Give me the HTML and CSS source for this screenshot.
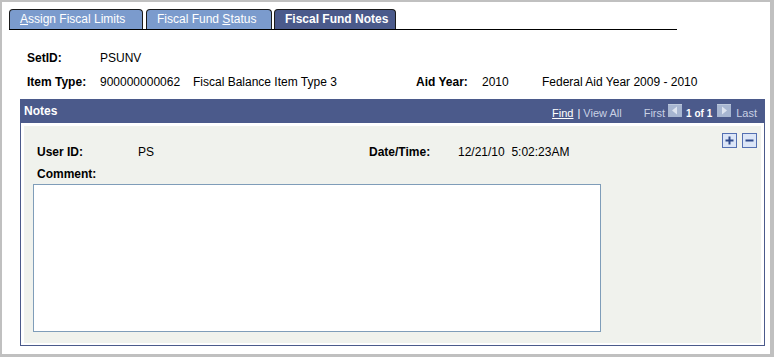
FILE: index.html
```html
<!DOCTYPE html>
<html>
<head>
<meta charset="utf-8">
<link rel="stylesheet" href="styles.css">
</head>
<body>
<div class="frame">
  <div class="tabs">
    <div class="tab tab-limits"><span class="key">A</span>ssign Fiscal Limits</div>
    <div class="tab tab-status">Fiscal Fund <span class="key">S</span>tatus</div>
    <div class="tab tab-notes active">Fiscal Fund Notes</div>
  </div>
  <div class="fields">
    <div class="row">
      <span class="lbl w-set">SetID:</span><span class="val">PSUNV</span>
    </div>
    <div class="row">
      <span class="lbl w-item">Item Type:</span><span class="val w-num">900000000062</span><span class="val w-desc">Fiscal Balance Item Type 3</span><span class="lbl w-aid">Aid Year:</span><span class="val w-year">2010</span><span class="val">Federal Aid Year 2009 - 2010</span>
    </div>
  </div>
  <div class="group">
    <div class="bar">
      <span class="title">Notes</span>
      <div class="nav">
        <span class="find">Find</span><span class="sep">|</span><span class="dim">View All</span><span class="dim first">First</span><svg class="arrow" width="14" height="13" viewBox="0 0 14 13"><rect x="0" y="0" width="14" height="13" fill="#a7b6d1"/><rect x="0" y="0" width="14" height="1" fill="#bcc8dc"/><polygon points="9,2.5 4,6.5 9,10.5" fill="#dde4f0"/></svg><span class="count">1 of 1</span><svg class="arrow" width="14" height="13" viewBox="0 0 14 13"><rect x="0" y="0" width="14" height="13" fill="#a7b6d1"/><rect x="0" y="0" width="14" height="1" fill="#bcc8dc"/><polygon points="5,2.5 10,6.5 5,10.5" fill="#dde4f0"/></svg><span class="dim last">Last</span>
      </div>
    </div>
    <div class="body">
      <div class="inner">
        <div class="main">
          <div class="row user-row">
            <span class="lbl w-user">User ID:</span><span class="val w-ps">PS</span><span class="lbl w-dt">Date/Time:</span><span class="val">12/21/10&nbsp; 5:02:23AM</span>
          </div>
          <div class="comment-label">Comment:</div>
          <textarea class="comment"></textarea>
        </div>
        <div class="rowbtns">
          <svg class="btn" width="15" height="15" viewBox="0 0 15 15"><rect x="0.5" y="0.5" width="14" height="14" fill="#dce6f7" stroke="#5470b2"/><path d="M7.5 3.5v8M3.5 7.5h8" stroke="#2f4a8c" stroke-width="2"/></svg>
          <svg class="btn" width="15" height="15" viewBox="0 0 15 15"><rect x="0.5" y="0.5" width="14" height="14" fill="#dce6f7" stroke="#5470b2"/><path d="M3.5 7.5h8" stroke="#2f4a8c" stroke-width="2"/></svg>
        </div>
      </div>
    </div>
  </div>
</div>
</body>
</html>
```
FILE: styles.css
```css
html, body {
  margin: 0;
  padding: 0;
  background: #ffffff;
}
body {
  font-family: "Liberation Sans", Arial, sans-serif;
  font-size: 12px;
  color: #000;
}
.frame {
  width: 774px;
  height: 357px;
  box-sizing: border-box;
  border-style: solid;
  border-color: #c0c0c0;
  border-width: 2px 4px 3px 2px;
  background: #fff;
  overflow: hidden;
}
.tabs {
  display: flex;
  align-items: flex-end;
  gap: 2px;
  margin: 7px 0 0 7px;
  width: 668px;
  height: 20px;
  border-bottom: 1px solid #000;
}
.tab {
  box-sizing: border-box;
  height: 20px;
  border: 1px solid #1a1a1a;
  border-bottom: none;
  border-radius: 4px 4px 0 0;
  background: #7b9bcd;
  color: #fff;
  line-height: 19px;
  padding-left: 10px;
  white-space: nowrap;
}
.tab-limits { width: 134px; }
.tab-status { width: 126px; margin-left: 1px; padding-left: 10px; }
.tab-notes { width: 122px; }
.tab.active {
  background: #4b5a8b;
  font-weight: bold;
}
.key { text-decoration: underline; }
.fields {
  margin-top: 16px;
  padding-left: 25px;
}
.row {
  display: flex;
  line-height: 24px;
  white-space: nowrap;
}
.lbl { font-weight: bold; }
.w-set { width: 73px; }
.w-item { width: 73px; }
.w-num { width: 93px; }
.w-desc { width: 223px; }
.w-aid { width: 66px; }
.w-year { width: 60px; }
.group {
  box-sizing: border-box;
  width: 745px;
  margin: 5px 0 0 18px;
  border: 1px solid #4b5a8b;
}
.bar {
  display: flex;
  height: 23px;
  background: #4b5a8b;
  color: #fff;
}
.title {
  font-weight: bold;
  line-height: 23px;
  padding-left: 3px;
}
.nav {
  margin-left: auto;
  padding: 2px 7px 0 0;
  line-height: 23px;
  font-size: 11px;
  white-space: nowrap;
}
.find {
  color: #fff;
  text-decoration: underline;
}
.sep {
  color: #fff;
  margin: 0 3px 0 4px;
}
.dim { color: #c9d1e4; }
.first { margin-left: 22px; margin-right: 3px; }
.arrow { vertical-align: baseline; }
.count {
  font-weight: bold;
  font-size: 10px;
  color: #fff;
  margin: 0 5px 0 4px;
}
.last { margin-left: 5px; }
.body {
  padding: 3px 3px 2px 3px;
  background: #fff;
}
.inner {
  display: flex;
  background: #f0f2ed;
  padding: 7px 4px 11px 9px;
}
.main {
  flex: 1;
  margin-top: 7px;
}
.user-row { padding-left: 4px; }
.w-user { width: 101px; }
.w-ps { width: 231px; }
.w-dt { width: 89px; }
.comment-label {
  font-weight: bold;
  line-height: 20px;
  padding-left: 4px;
}
.comment {
  display: block;
  box-sizing: border-box;
  width: 568px;
  height: 148px;
  margin: 0;
  padding: 0;
  border: 1px solid #7f9db9;
  background: #fff;
  resize: none;
  font-family: "Liberation Sans", Arial, sans-serif;
}
.rowbtns {
  display: flex;
  gap: 5px;
  align-self: flex-start;
}
.btn { display: block; }
```
